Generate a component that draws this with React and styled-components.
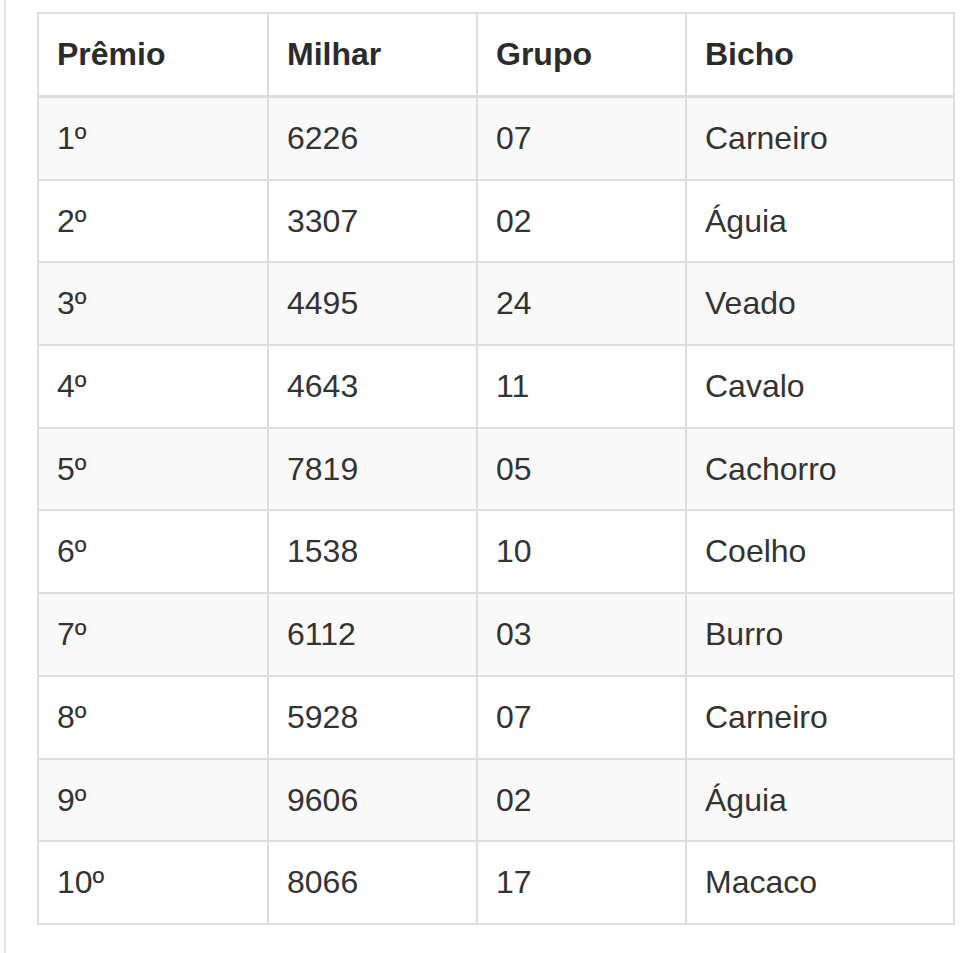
import styled, { createGlobalStyle } from "styled-components";

const GlobalStyle = createGlobalStyle`
  html, body {
    margin: 0;
    padding: 0;
    background: #fff;
  }
`;

const results = [
  { premio: "1º", milhar: "6226", grupo: "07", bicho: "Carneiro" },
  { premio: "2º", milhar: "3307", grupo: "02", bicho: "Águia" },
  { premio: "3º", milhar: "4495", grupo: "24", bicho: "Veado" },
  { premio: "4º", milhar: "4643", grupo: "11", bicho: "Cavalo" },
  { premio: "5º", milhar: "7819", grupo: "05", bicho: "Cachorro" },
  { premio: "6º", milhar: "1538", grupo: "10", bicho: "Coelho" },
  { premio: "7º", milhar: "6112", grupo: "03", bicho: "Burro" },
  { premio: "8º", milhar: "5928", grupo: "07", bicho: "Carneiro" },
  { premio: "9º", milhar: "9606", grupo: "02", bicho: "Águia" },
  { premio: "10º", milhar: "8066", grupo: "17", bicho: "Macaco" },
];

const columns = [
  { label: "Prêmio", width: 230 },
  { label: "Milhar", width: 209 },
  { label: "Grupo", width: 209 },
  { label: "Bicho", width: 268 },
];

const Page = styled.div`
  margin-left: 4px;
  min-height: 100vh;
  box-sizing: border-box;
  border-left: 2px solid #e4e4e4;
  padding: 12px 0 0 31px;
`;

const Table = styled.table`
  width: 916px;
  table-layout: fixed;
  border-collapse: collapse;
  border: 2px solid #dddddd;
  font-family: "Liberation Sans", Arial, sans-serif;
  font-size: 32px;
  color: #333;
`;

const HeaderCell = styled.th`
  text-align: left;
  font-weight: 700;
  line-height: 45px;
  padding: 18px;
  border: 2px solid #dddddd;
  border-bottom-width: 3px;
  color: #2b2b2b;
`;

const Row = styled.tr`
  background: ${({ $striped }) => ($striped ? "#f9f9f9" : "#ffffff")};
`;

const Cell = styled.td`
  line-height: 45px;
  padding: 18px 18px 17.7px;
  border: 2px solid #dddddd;
`;

export default function App() {
  return (
    <>
      <GlobalStyle />
      <Page>
        <Table>
          <colgroup>
            {columns.map((col) => (
              <col key={col.label} style={{ width: col.width }} />
            ))}
          </colgroup>
          <thead>
            <tr>
              {columns.map((col) => (
                <HeaderCell key={col.label}>{col.label}</HeaderCell>
              ))}
            </tr>
          </thead>
          <tbody>
            {results.map((r, i) => (
              <Row key={r.premio} $striped={i % 2 === 0}>
                <Cell>{r.premio}</Cell>
                <Cell>{r.milhar}</Cell>
                <Cell>{r.grupo}</Cell>
                <Cell>{r.bicho}</Cell>
              </Row>
            ))}
          </tbody>
        </Table>
      </Page>
    </>
  );
}
